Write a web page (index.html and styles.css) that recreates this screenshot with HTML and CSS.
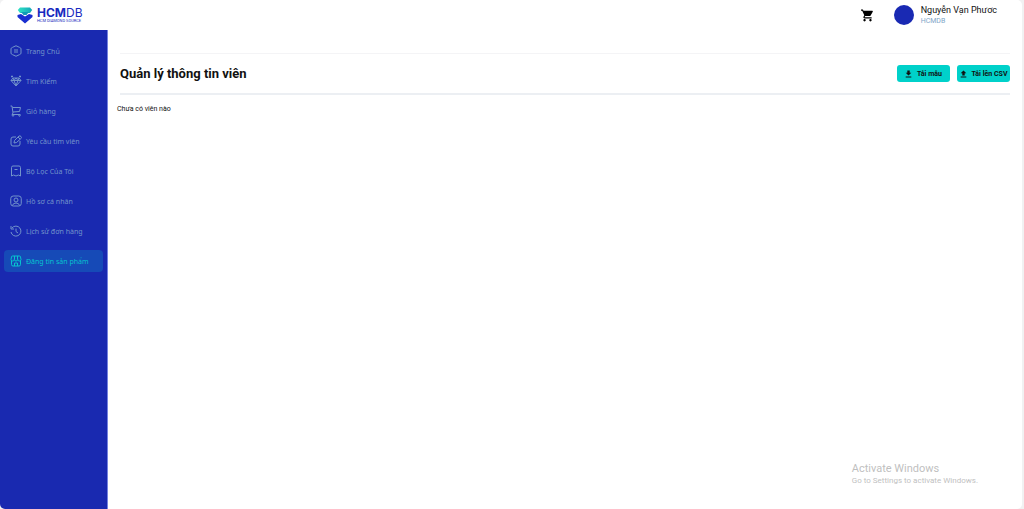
FILE: index.html
```
<!DOCTYPE html>
<html lang="vi">
<head>
    <meta charset="UTF-8">
    <meta name="viewport" content="width=device-width,initial-scale=1.0">
    <title>Quản lý thông tin viên</title>
    <link rel="stylesheet" href="styles.css">
</head>
<body>
<div class="app">

    <header class="header">
        <a class="logo" href="#">
            <svg class="logo-mark" viewBox="0 0 16 17">
                <defs>
                    <linearGradient id="teal" x1="0" x2="1" y1="0" y2="0">
                        <stop offset="0" stop-color="#2fe3c4"/>
                        <stop offset="1" stop-color="#12a5b8"/>
                    </linearGradient>
                </defs>
                <path d="M3 0.5h10l2.2 2.500L13 6H3L0.8 3z" fill="url(#teal)"/>
                <path d="M4 5h8L9.500 8h-3z" fill="#129bb5"/>
                <path d="M0.500 8L4 7l4 2.500L12 7l3.500 1v2L8 16.500 0.500 10z" fill="#1a2fd0"/>
            </svg>
            <span class="logo-text">
                <span class="logo-name"><b>HCM</b>DB</span>
                <span class="logo-sub">HCM DIAMOND SOURCE</span>
            </span>
        </a>
        <div class="user">
            <button class="cart" aria-label="Giỏ hàng">
                <svg viewBox="1 1 22 22" fill="currentColor"><path d="M7 18c-1.100 0-1.990.9-1.990 2S5.900 22 7 22s2-.9 2-2-.9-2-2-2zM1 2v2h2l3.600 7.590-1.350 2.450c-.16.28-.25.61-.25.96 0 1.100.9 2 2 2h12v-2H7.420c-.14 0-.25-.11-.25-.25l.03-.12.9-1.630h7.450c.75 0 1.410-.41 1.750-1.030l3.580-6.490A1 1 0 0 0 20 4H5.210l-.94-2H1zm16 16c-1.100 0-1.990.9-1.990 2s.89 2 1.990 2 2-.9 2-2-.9-2-2-2z"/></svg>
            </button>
            <span class="avatar"></span>
            <div class="user-info">
                <span class="user-name">Nguyễn Vạn Phươc</span>
                <span class="user-role">HCMDB</span>
            </div>
        </div>
    </header>

    <div class="body">
        <nav class="sidebar">
            <a class="menu-item" href="#">
                <svg viewBox="0 0 24 24"><path d="M12 1.500l7 3.200q3 1 3 3v8.600q0 2-3 3l-7 3.200-7-3.200q-3-1-3-3V7.700q0-2 3-3zM8 10h8M8 14h8"/></svg>
                <span>Trang Chủ</span>
            </a>
            <a class="menu-item" href="#">
                <svg viewBox="0 0 24 24"><path d="M6 6h12l4 5-10 11L2 11zM2 11h20M8 11l4 10 4-10-4-5zM6 6l2 5M18 6l-2 5M4 1v4M2 3h4M20 1v4M18 3h4"/></svg>
                <span>Tìm Kiếm</span>
            </a>
            <a class="menu-item" href="#">
                <svg viewBox="0 0 24 24"><path d="M1 2h3l2 14M5 5h16l-2 8L6 14M6 16l-2 3h17"/><circle cx="6" cy="21" r="1.500"/><circle cx="19" cy="21" r="1.500"/></svg>
                <span>Giỏ hàng</span>
            </a>
            <a class="menu-item" href="#">
                <svg viewBox="0 0 24 24"><path d="M12 4H6q-4 0-4 4v10q0 4 4 4h10q4 0 4-4v-6M8 16l1-5 9-9q2-1 4 1t0 4l-9 8zM16 4l4 4"/></svg>
                <span>Yêu cầu tìm viên</span>
            </a>
            <a class="menu-item" href="#">
                <svg viewBox="0 0 24 24"><path d="M3 22V5q0-3 3-3h12q3 0 3 3v17l-4-2-5 2-5-2zM9 9h6"/></svg>
                <span>Bộ Lọc Của Tôi</span>
            </a>
            <a class="menu-item" href="#">
                <svg viewBox="0 0 24 24"><rect x="1.500" y="2" width="21" height="20" rx="5"/><circle cx="12" cy="10" r="4"/><path d="M5 21q1-5 7-5t7 5"/></svg>
                <span>Hồ sơ cá nhân</span>
            </a>
            <a class="menu-item" href="#">
                <svg viewBox="0 0 24 24"><path d="M4 6a10 10 0 1 1-2 8M2 2v6h6M12 7v6l4 3"/></svg>
                <span>Lịch sử đơn hàng</span>
            </a>
            <a class="menu-item active" href="#">
                <svg viewBox="0 0 24 24"><path d="M3 11v8q0 3 3 3h12q3 0 3-3v-8M5 2h14q2 0 2 2l1 5q0 3-3 3t-3.500-3q-.5 3-3.500 3t-3.500-3q-.5 3-3.500 3t-3-3l1-5q0-2 2-2zM9 2v7M15 2v7M9 22v-6h6v6"/></svg>
                <span>Đăng tin sản phẩm</span>
            </a>
        </nav>

        <main class="content">
            <div class="title-bar">
                <h1>Quản lý thông tin viên</h1>
                <div class="actions">
                    <button class="btn">
                        <svg viewBox="4 2 16 20" fill="currentColor"><path d="M19 9h-4V3H9v6H5l7 7zM5 18v3h14v-3z"/></svg>
                        Tải mẫu
                    </button>
                    <button class="btn">
                        <svg viewBox="4 2 16 20" fill="currentColor"><path d="M9 16h6v-6h4l-7-7-7 7h4zM5 18v3h14v-3z"/></svg>
                        Tải lên CSV
                    </button>
                </div>
            </div>
            <p class="empty">Chưa có viên nào</p>
        </main>
    </div>

    <div class="watermark">
        <div class="watermark-title">Activate Windows</div>
        <div>Go to Settings to activate Windows.</div>
    </div>
</div>
</body>
</html>
```

FILE: styles.css
```
* {
    box-sizing: border-box;
}

body {
    margin: 0;
    padding-right: 2px;
    background: #f1f1f2;
    font-family: Roboto, sans-serif;
    color: #111;
}

.app {
    position: relative;
    display: flex;
    flex-direction: column;
    min-height: 100vh;
    background: #fff;
    border-radius: 5px;
    overflow: hidden;
}

.header {
    display: flex;
    align-items: center;
    justify-content: space-between;
    height: 30px;
    padding: 0 25px 0 17px;
}

.logo {
    display: flex;
    align-items: center;
    gap: 4px;
    color: #1a2bc0;
    text-decoration: none;
}

.logo-mark {
    width: 16px;
    height: 17px;
}

.logo-text {
    display: flex;
    flex-direction: column;
}

.logo-name {
    font-family: Inter, sans-serif;
    font-size: 12px;
    line-height: 12px;
}

.logo-sub {
    font-size: 4px;
    line-height: 4px;
}

.user {
    display: flex;
    align-items: center;
}

.cart {
    display: flex;
    margin-right: 20px;
    padding: 0;
    border: none;
    background: none;
    color: #000;
    cursor: pointer;
}

.cart svg {
    width: 13px;
    height: 13px;
}

.avatar {
    width: 20px;
    height: 20px;
    margin-right: 7px;
    border-radius: 50%;
    background: #1929b3;
}

.user-info {
    display: flex;
    flex-direction: column;
}

.user-name {
    font-size: 9px;
    line-height: 11px;
}

.user-role {
    color: #7fa5c8;
    font-size: 7px;
    line-height: 10px;
}

.body {
    display: flex;
    flex: 1;
}

.sidebar {
    display: flex;
    flex-direction: column;
    gap: 8px;
    width: 108px;
    padding: 10px 4px;
    border-right: 1px solid #7583e0;
    background: #1929b0;
}

.menu-item {
    display: flex;
    align-items: center;
    gap: 4px;
    height: 22px;
    padding: 0 6px;
    border-radius: 4px;
    color: #7394cb;
    font-family: "Noto Sans", sans-serif;
    font-size: 7px;
    text-decoration: none;
    white-space: nowrap;
}

.menu-item svg {
    width: 12px;
    height: 12px;
    fill: none;
    stroke: currentColor;
    stroke-width: 2;
    stroke-linejoin: round;
}

.menu-item.active {
    background: #164ab7;
    color: #06c3cf;
}

.content {
    flex: 1;
    padding: 23px 12px;
}

.title-bar {
    display: flex;
    align-items: center;
    justify-content: space-between;
    height: 42px;
    border-top: 1px solid #f4f4f6;
    border-bottom: 2px solid #eceff3;
}

.title-bar h1 {
    margin: 0;
    font-size: 13px;
}

.actions {
    display: flex;
    gap: 7px;
}

.btn {
    display: flex;
    align-items: center;
    justify-content: center;
    gap: 5px;
    width: 53px;
    height: 17px;
    padding: 0;
    border: none;
    border-radius: 3px;
    background: #00d1ca;
    color: #111;
    font-family: inherit;
    font-size: 7px;
    font-weight: bold;
    white-space: nowrap;
    cursor: pointer;
}

.btn svg {
    width: 7px;
    height: 8px;
}

.empty {
    margin: 9px 0 0 -3px;
    font-size: 7px;
    line-height: 10px;
}

/* floats over the page corner */
.watermark {
    position: absolute;
    right: 44px;
    bottom: 22px;
    color: #bfbfbf;
    font-family: Roboto, sans-serif;
    font-size: 8px;
    line-height: 12px;
}

.watermark-title {
    font-size: 11px;
}
```
